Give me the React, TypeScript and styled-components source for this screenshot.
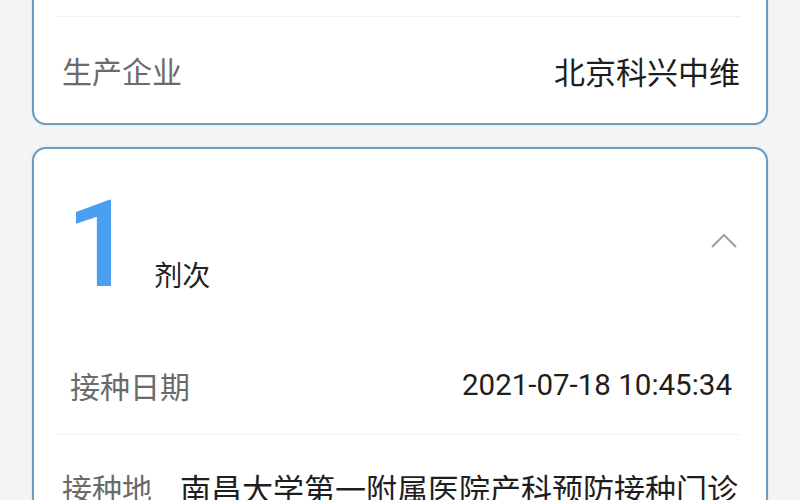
import React from "react";
import styled, { createGlobalStyle } from "styled-components";

const GlobalStyle = createGlobalStyle`
  html, body {
    margin: 0;
    padding: 0;
    background: #f4f4f4;
    font-family: Roboto, "Noto Sans CJK SC", sans-serif;
    overflow: hidden;
  }
`;

const Page = styled.div`
  width: 800px;
  height: 500px;
  overflow: hidden;
  padding: 0 32px;
  box-sizing: border-box;
`;

const Card = styled.div<{ $top?: number }>`
  margin-top: ${(p) => p.$top ?? 0}px;
  background: #fff;
  border: 2px solid #6a9dbd;
  border-radius: 14px;
  box-shadow: 0 0 2px rgba(120, 180, 215, 0.45);
  box-sizing: border-box;
`;

const Row = styled.div<{ $h: number; $inset?: number; $line?: boolean }>`
  height: ${(p) => p.$h}px;
  margin: 0 26px 0 24px;
  padding: 0 ${(p) => p.$inset ?? 0}px 0 ${(p) => 4 + (p.$inset ?? 0)}px;
  display: flex;
  align-items: center;
  justify-content: space-between;
  border-bottom: ${(p) => (p.$line ? "1.5px solid #f0f0f0" : "none")};
  box-sizing: border-box;
`;

const Label = styled.span`
  font-family: "Noto Sans CJK SC", sans-serif;
  font-size: 30px;
  color: #6a6a6a;
  white-space: nowrap;
`;

const Value = styled.span<{ $mono?: boolean }>`
  font-family: ${(p) =>
    p.$mono ? 'Roboto, "Noto Sans", sans-serif' : '"Noto Sans CJK SC", sans-serif'};
  font-size: ${(p) => (p.$mono ? 29.5 : 31)}px;
  color: #1e1e1e;
  white-space: nowrap;
`;

const Header = styled.div`
  height: 186px;
  display: flex;
  align-items: center;
  justify-content: space-between;
  padding: 0 28px 0 32px;
`;

const Dose = styled.div`
  display: flex;
  align-items: baseline;
  gap: 20px;
  margin-top: 6px;
`;

const Big = styled.span`
  font-family: Roboto, sans-serif;
  font-weight: 500;
  font-size: 120px;
  line-height: 1;
  color: #4b9ff0;
`;

const Unit = styled.span`
  font-family: "Noto Sans CJK SC", sans-serif;
  font-size: 28px;
  color: #222;
`;

const Chevron = styled.svg`
  width: 28px;
  height: 18px;
  margin-top: -4px;
`;

const AddressRow = styled.div`
  display: flex;
  align-items: flex-start;
  gap: 28px;
  margin: 0 26px 0 24px;
  padding: 30px 0 0 4px;
`;

export default function App() {
  return (
    <Page>
      <GlobalStyle />
      <Card $top={-62}>
        <Row $h={77} $line />
        <Row $h={106}>
          <Label>生产企业</Label>
          <Value>北京科兴中维</Value>
        </Row>
      </Card>
      <Card $top={22}>
        <Header>
          <Dose>
            <Big>1</Big>
            <Unit>剂次</Unit>
          </Dose>
          <Chevron viewBox="0 0 28 18">
            <polyline
              points="2,16 14,4 26,16"
              fill="none"
              stroke="#a0a0a0"
              strokeWidth="2"
            />
          </Chevron>
        </Header>
        <Row $h={100} $inset={8} $line>
          <Label>接种日期</Label>
          <Value $mono>2021-07-18 10:45:34</Value>
        </Row>
        <AddressRow>
          <Label>接种地</Label>
          <Value>南昌大学第一附属医院产科预防接种门诊</Value>
        </AddressRow>
      </Card>
    </Page>
  );
}
